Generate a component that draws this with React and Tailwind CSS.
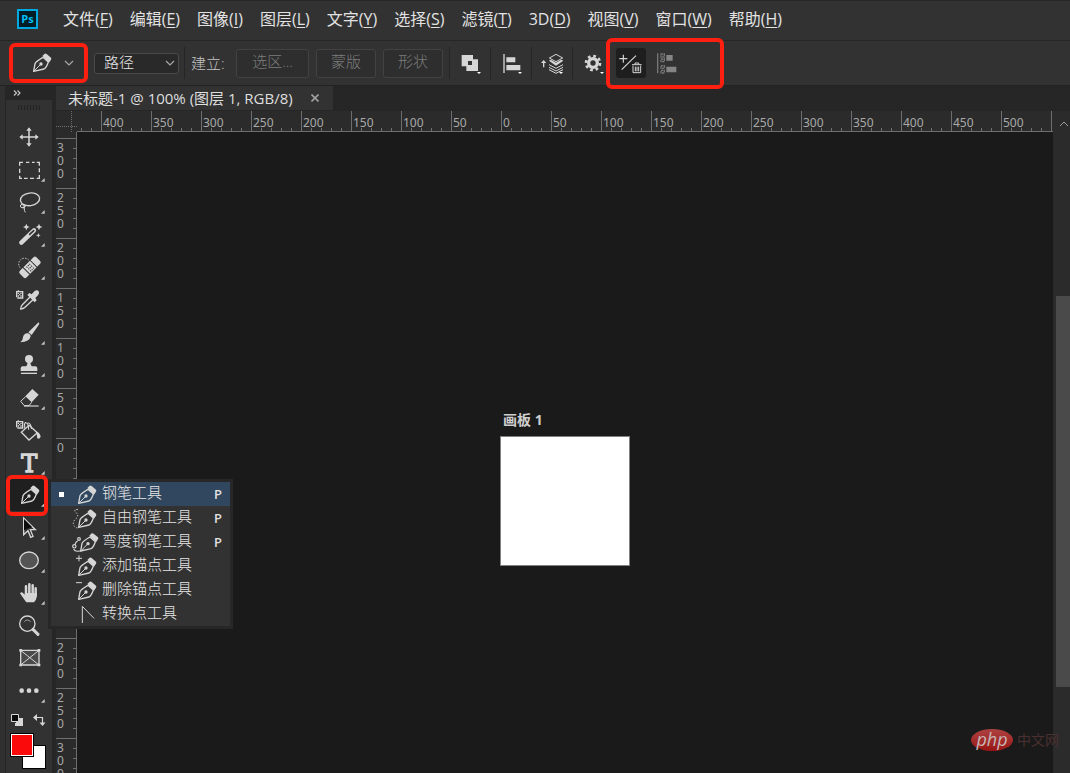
import React from "react";

const INK = "#d6d6d6";

function Glyph({ children, className = "size-[30px]" }) {
  return (
    <svg viewBox="0 0 90 90" className={`${className} shrink-0 overflow-visible`} fill="none" stroke={INK} strokeWidth="4" aria-hidden="true">
      {children}
    </svg>
  );
}

function Nib() {
  return (
    <g>
      <path d="M5 56 L9 33 Q12 26 33 14 L49 28 Q43 46 36 49 Z" strokeWidth="4" strokeLinejoin="round" />
      <path d="M6 55 L25 36" strokeWidth="3" />
      <circle cx="27" cy="34" r="5" fill={INK} stroke="none" />
      <path d="M31 10 L38 3 Q41 2 44 4 L57 15 Q59 18 57 21 L51 30 Z" fill={INK} stroke="none" />
    </g>
  );
}

function PatternChip() {
  return (
    <g stroke="none" fill={INK}>
      <path d="M6 18 h5 v-2 h4 v2 h13 v23 h-18 v-4 h-4 z M10 22 v15 h14 v-15 z" fillRule="evenodd" />
      <path d="M11 23h4v4h-4zM19 23h4v4h-4zM15 27h4v4h-4zM11 31h4v4h-4zM19 31h4v4h-4z" />
    </g>
  );
}

function Chevron() {
  return (
    <svg viewBox="0 0 10 6" className="h-[6px] w-[10px] shrink-0" fill="none" stroke="#a8a8a8" strokeWidth="1.2" aria-hidden="true">
      <path d="M1 1 L5 5 L9 1" />
    </svg>
  );
}

const tools = [
  { name: "移动工具", icon: (
    <g>
      <path d="M45 22 V70 M22 45 H70" strokeWidth="4.5" />
      <path d="M45 16 l8 10 h-16z M45 74 l8 -10 h-16z M16 45 l10 -8 v16z M74 45 l-10 -8 v16z" fill={INK} stroke="none" />
    </g>
  ) },
  { name: "矩形选框工具", more: true, icon: (
    <path d="M17 32 V22 H27 M36 22 H46 M54 22 H62 M68 22 H76 V32 M76 40 V52 M76 60 V70 H68 M60 70 H48 M41 70 H30 M24 70 H17 V62 M17 54 V41" />
  ) },
  { name: "套索工具", more: true, icon: (
    <g>
      <ellipse cx="48" cy="37" rx="29" ry="19" transform="rotate(-8 48 37)" />
      <ellipse cx="26" cy="57" rx="7" ry="5" strokeWidth="3" />
      <path d="M22 50 Q34 58 31 66 Q30 70 34 76 M24 62 Q30 66 36 55" strokeWidth="3" />
    </g>
  ) },
  { name: "魔棒工具", more: true, icon: (
    <g>
      <path d="M22 68 L60 31" strokeWidth="13" strokeLinecap="round" />
      <path d="M47 43 L59 32" stroke="#323232" strokeWidth="5" strokeLinecap="round" />
      <path d="M37 11 l3 7 7 3 -7 3 -3 7 -3 -7 -7 -3 7 -3z M75 11 l3 7 7 3 -7 3 -3 7 -3 -7 -7 -3 7 -3z M73 39 l2 5 5 2 -5 2 -2 5 -2 -5 -5 -2 5 -2z" fill={INK} stroke="none" />
    </g>
  ) },
  { name: "污点修复画笔工具", more: true, icon: (
    <g>
      <g transform="rotate(-45 48 43)">
        <rect x="13" y="29" width="70" height="28" rx="6" fill={INK} stroke="none" />
        <path d="M33 28 V58 M63 28 V58" stroke="#323232" strokeWidth="3" />
        <path d="M42 34 V55 M48 34 V55 M54 34 V55" stroke="#323232" strokeWidth="3" strokeDasharray="4 4" />
      </g>
      <path d="M18 44 A16 16 0 1 1 45 22" strokeWidth="3" strokeDasharray="4 4" />
    </g>
  ) },
  { name: "吸管工具", icon: (
    <g>
      <PatternChip />
      <path d="M48 36 L25 59 Q20 64 20 72 Q28 72 33 67 L57 44" strokeWidth="4" />
      <path d="M40 30 L46 24 L53 28 L61 19 Q68 13 74 18 Q78 24 72 31 L64 39 L68 46 L62 52 Z" fill={INK} stroke="none" />
    </g>
  ) },
  { name: "画笔工具", more: true, icon: (
    <g fill={INK} stroke="none">
      <path d="M75 14 Q77 16 74 21 L53 51 L43 43 L69 17 Q73 13 75 14z" />
      <path d="M40 46 Q49 47 50 55 Q47 72 19 73 Q27 67 27 58 Q29 47 40 46z" />
    </g>
  ) },
  { name: "仿制图章工具", more: true, icon: (
    <g fill={INK} stroke="none">
      <circle cx="45" cy="27" r="12" />
      <path d="M40 34 h10 q-2 10 3 15 h12 q5 1 5 6 v8 h-50 v-8 q0 -5 5 -6 h12 q5 -5 3 -15z" />
      <path d="M21 68 h48 v4 h-48z" />
    </g>
  ) },
  { name: "橡皮擦工具", more: true, icon: (
    <g>
      <path d="M34 40 L55 18 L74 35 L53 58 Z" fill={INK} stroke="none" />
      <path d="M35 41 L20 55 L31 68 H45 L53 58" strokeWidth="3" />
      <path d="M30 69 H74" strokeWidth="3.5" />
    </g>
  ) },
  { name: "油漆桶工具", icon: (
    <g>
      <PatternChip />
      <path d="M45 31 L70 53 L45 75 L22 52 Z" strokeWidth="4" />
      <path d="M33 42 Q29 22 36 23 Q43 23 44 44 M42 24 Q50 23 53 42" strokeWidth="3.5" />
      <path d="M65 50 Q77 50 80 64 Q79 71 74 71 Q68 71 69 62z" fill={INK} stroke="none" />
    </g>
  ) },
  { name: "文字工具", more: true, icon: (
    <text x="46" y="71" textAnchor="middle" fontSize="72" fontFamily="DejaVu Serif, serif" fill={INK}>T</text>
  ) },
  { name: "钢笔工具", more: true, active: true, icon: <g transform="translate(18 14)"><Nib /></g> },
  { name: "路径选择工具", more: true, icon: (
    <g>
      <path d="M29 15 V65 L42 53 L50 73 L57 70 L49 50 H64 Z" fill="#323232" strokeWidth="4" />
      <path d="M30 18 V52 L42 46 L54 42 Z" fill="#0c0c0c" stroke="none" />
    </g>
  ) },
  { name: "椭圆工具", more: true, icon: <ellipse cx="45" cy="43" rx="28" ry="25" fill="#545454" /> },
  { name: "抓手工具", more: true, icon: (
    <g>
      <path d="M36 25 V50 M46 19 V48 M56 22 V48 M65 31 V50" strokeWidth="7.5" strokeLinecap="round" />
      <path d="M32 45 H69 V54 Q67 66 60 73 H37 Q30 64 18 46 Q22 40 27 45 L33 51z" fill={INK} stroke="none" />
    </g>
  ) },
  { name: "缩放工具", icon: (
    <g>
      <circle cx="40" cy="38" r="23" />
      <path d="M31 32 Q39 22 50 32" stroke="#a0a0a0" strokeWidth="3" />
      <path d="M57 55 L72 70" strokeWidth="9" strokeLinecap="round" />
    </g>
  ) },
  { name: "画框工具", icon: (
    <g>
      <path d="M20 22 H75 V66 H20 Z" fill="#4a4a4a" />
      <path d="M20 22 L75 66 M75 22 L20 66" strokeWidth="3" />
      <path d="M16 18h8v8h-8zM71 18h8v8h-8zM16 62h8v8h-8zM71 62h8v8h-8z" fill={INK} stroke="none" />
    </g>
  ) },
  { name: "编辑工具栏", more: true, icon: (
    <g fill={INK} stroke="none">
      <circle cx="23" cy="44" r="7" />
      <circle cx="45" cy="44" r="7" />
      <circle cx="67" cy="44" r="7" />
    </g>
  ) },
];

const menus = [
  ["文件", "F"], ["编辑", "E"], ["图像", "I"], ["图层", "L"], ["文字", "Y"], ["选择", "S"],
  ["滤镜", "T"], ["3D", "D"], ["视图", "V"], ["窗口", "W"], ["帮助", "H"],
];

const penTools = [
  { name: "钢笔工具", shortcut: "P", selected: true },
  { name: "自由钢笔工具", shortcut: "P", extra: <path d="M21 20 Q10 17 12 26 Q23 33 19 44 Q7 52 7 62 Q9 73 20 75" strokeWidth="3" strokeDasharray="4 5" /> },
  { name: "弯度钢笔工具", shortcut: "P", wide: true, extra: (
    <g strokeWidth="3.5">
      <path d="M38 69 Q12 78 8 66 M12 52 Q14 45 20 41" />
      <circle cx="24" cy="36" r="4" />
      <circle cx="10" cy="58" r="5" />
    </g>
  ) },
  { name: "添加锚点工具", extra: <path d="M15 22 H33 M24 13 V31" strokeWidth="3" /> },
  { name: "删除锚点工具", extra: <path d="M15 23 H33" strokeWidth="3" /> },
  { name: "转换点工具", plain: <path d="M34 72 V22 L69 58" strokeWidth="3" /> },
];

const hMarks = [400, 350, 300, 250, 200, 150, 100, 50, 0, 50, 100, 150, 200, 250, 300, 350, 400, 450, 500, ""];
const vMarks = [300, 250, 200, 150, 100, 50, 0, 50, 100, 150, 200, 250, 300];
const fifths = [0, 1, 2, 3, 4];

function Marker({ className }) {
  return <span className={`pointer-events-none absolute z-30 rounded-md border-4 border-[#fd2010] ${className}`} />;
}

function Divider() {
  return <span className="h-8 w-px shrink-0 bg-[#252525]" />;
}

function IconButton({ label, children }) {
  return (
    <button type="button" aria-label={label} className="flex h-8 w-10 shrink-0 items-center justify-center">
      <Glyph>
        {children}
        <path d="M66 72 h12 l-6 6z" fill="#fff" stroke="none" />
      </Glyph>
    </button>
  );
}

function MenuBar() {
  return (
    <header className="flex h-10 shrink-0 items-center border-t border-[#262626] bg-[#323232] pb-1 pl-[17px]">
      <span className="mr-[25px] flex h-5 w-[21px] items-center justify-center border-2 border-[#00a9e2] bg-[#001c27] font-['Open_Sans'] text-[11px] leading-none font-bold text-[#00bff5]">Ps</span>
      <nav className="flex gap-[17px] text-[16px] leading-5 whitespace-nowrap text-[#e2e2e2]">
        {menus.map(([label, key]) => (
          <button type="button" key={label}>{label}(<u className="underline-offset-2">{key}</u>)</button>
        ))}
      </nav>
    </header>
  );
}

function OptionsBar() {
  const action = "h-[29px] rounded-[3px] border border-[#424242] bg-[#2e2e2e] pb-1 text-[15px] leading-5 font-light text-[#7d7d7d]";
  return (
    <section className="flex h-[46px] shrink-0 items-center border-y border-t-[#262626] border-b-[#222] bg-[#323232] pl-[9px]">
      <div className="relative flex h-10 w-[79px] shrink-0 items-center">
        <button type="button" aria-label="钢笔工具预设" className="flex h-8 w-full items-center justify-end gap-2 pr-[14px]">
          <Glyph>
            <g transform="translate(18 14)"><Nib /></g>
          </Glyph>
          <Chevron />
        </button>
        <Marker className="inset-0" />
      </div>
      <label className="relative ml-[6px] flex items-center">
        <span className="sr-only">工具模式</span>
        <select className="h-[21px] w-[85px] appearance-none rounded-[3px] border border-[#4a4a4a] bg-[#292929] pb-1 pl-[9px] text-[15px] leading-4 font-light text-[#e8e8e8]">
          <option>路径</option>
          <option>形状</option>
          <option>像素</option>
        </select>
        <span className="pointer-events-none absolute right-1"><Chevron /></span>
      </label>
      <span className="ml-[5px]" />
      <Divider />
      <span className="ml-[6px] w-[45px] text-[15px] leading-5 font-light whitespace-nowrap text-[#c4c4c4]">建立:</span>
      <div className="flex shrink-0 gap-[7px] pr-[6px]">
        <button type="button" className={`${action} w-[73px]`}>选区...</button>
        <button type="button" className={`${action} w-[60px]`}>蒙版</button>
        <button type="button" className={`${action} w-[60px]`}>形状</button>
      </div>
      <Divider />
      <IconButton label="路径操作">
        <path d="M20 21 H54 V34 H69 V69 H34 V55 H20 Z M39 39 V51 H51 V39 Z" fill={INK} fillRule="evenodd" stroke="none" />
      </IconButton>
      <Divider />
      <IconButton label="路径对齐方式">
        <path d="M24 18 V75" />
        <path d="M31 28 h27 v15 h-27z M31 51 h42 v16 h-42z" fill={INK} stroke="none" />
      </IconButton>
      <Divider />
      <IconButton label="路径排列方式">
        <path d="M20 58 V42" />
        <path d="M20 36 l8 9 h-16z" fill={INK} stroke="none" />
        <path d="M57 19 L77 30 L57 41 L37 30 Z" strokeWidth="3" />
        <path d="M36 38 L41 35 L57 44 L73 35 L79 38 L57 53 Z" fill={INK} stroke="none" />
        <path d="M36 50 L57 61 L78 50 M36 58 L57 69 L78 58 M36 65 L57 76 L78 65" strokeWidth="3" />
      </IconButton>
      <Divider />
      <IconButton label="设置">
        <circle cx="45" cy="45" r="13" strokeWidth="10" />
        <circle cx="45" cy="45" r="21" strokeWidth="8" strokeDasharray="8.25 8.25" />
      </IconButton>
      <div className="relative ml-[3px] flex shrink-0 items-center gap-[6px]">
        <button type="button" aria-label="自动添加/删除" className="rounded-[3px] bg-[#1e1e1e]">
          <Glyph>
            <path d="M22 20 V44 M10 32 H34 M17 65 L60 23" strokeWidth="3.5" />
            <path d="M48 50 H77 M57 49 V45 H68 V49 M51 53 V74 H74 V53 M58 56 V70 M63 56 V70 M68 56 V70" strokeWidth="3" />
          </Glyph>
        </button>
        <button type="button" aria-label="对齐边缘">
          <Glyph>
            <g stroke="#777" strokeWidth="3">
              <path d="M17 16 V76" strokeWidth="4" />
              <path d="M27 18 h10 v9 h-10z M27 33 h10 v8 h-10z M27 53 h10 v8 h-10z M27 67 h10 v8 h-10z" strokeWidth="4" strokeDasharray="7 2" />
              <path d="M43 21 h19 v17 h-19z M43 56 h30 v17 h-30z" fill="#858585" stroke="none" />
            </g>
          </Glyph>
        </button>
        <Marker className="-top-[10px] -left-[10px] h-[51px] w-[118px]" />
      </div>
    </section>
  );
}

function PenFlyout() {
  return (
    <ul role="menu" className="absolute top-0 left-[42px] z-20 w-[185px] border-[3px] border-[#272727] bg-[#323232] text-[15px] leading-6 text-[#e6e6e6]">
      {penTools.map((tool) => (
        <li key={tool.name} role="none">
          <button type="button" role="menuitem" className={`flex h-6 w-full items-center pr-2 pl-2 whitespace-nowrap ${tool.selected ? "bg-[#30475f]" : ""}`}>
            <span className={`size-[5px] shrink-0 ${tool.selected ? "bg-white" : ""}`} />
            <span className="ml-[7px] flex w-[31px] shrink-0">
              <Glyph>
                {tool.extra}
                {tool.plain || <g transform={tool.wide ? "translate(24 16)" : "translate(18 17)"}><Nib /></g>}
              </Glyph>
            </span>
            <span className="flex-1 pb-1 text-left font-light">{tool.name}</span>
            <span className="font-['Noto_Sans'] text-[13px] font-medium">{tool.shortcut}</span>
          </button>
        </li>
      ))}
    </ul>
  );
}

function Toolbar() {
  return (
    <aside className="relative z-10 flex w-[46px] shrink-0 flex-col bg-[#323232]">
      <div className="flex h-[14px] shrink-0 items-center bg-[#262626] pl-[7px]">
        <svg viewBox="0 0 8 6" className="h-[6px] w-2" fill="none" stroke="#c4c4c4" strokeWidth="1.2" aria-hidden="true">
          <path d="M1 0.5 L3.5 3 L1 5.5 M4.5 0.5 L7 3 L4.5 5.5" />
        </svg>
      </div>
      <div className="flex h-[21px] shrink-0 justify-center gap-[2px] pt-[5px]">
        {[0, 1, 2, 3, 4, 5, 6, 7].map((n) => <span key={n} className="h-[5px] w-px bg-[#222]" />)}
      </div>
      <div className="flex h-[586px] shrink-0 flex-col">
        {tools.map((tool) => (
          <div key={tool.name} className="relative flex flex-1 items-center justify-center">
            <button type="button" aria-label={tool.name} className={`flex h-8 items-center justify-center ${tool.active ? "w-[38px] bg-[#1f1f1f]" : "w-10"}`}>
              <Glyph>
                {tool.icon}
                {tool.more && <path d="M92 69 V80 H81 Z" fill="#c4c4c4" stroke="none" />}
              </Glyph>
            </button>
            {tool.active && <Marker className="-top-1 left-0 h-[41px] w-[42px]" />}
            {tool.active && <PenFlyout />}
          </div>
        ))}
      </div>
      <div className="flex h-[26px] shrink-0 items-center gap-2 pl-1">
        <button type="button" aria-label="默认前景色和背景色">
          <svg viewBox="0 0 14 14" className="size-[14px]" aria-hidden="true">
            <path d="M6 5h7v8h-8v-3h1z" fill="#d6d6d6" />
            <path d="M1.5 1.5h7v7h-7z" fill="#0a0a0a" stroke="#d6d6d6" />
          </svg>
        </button>
        <button type="button" aria-label="切换前景色和背景色">
          <svg viewBox="0 0 14 14" className="size-[14px]" fill="none" stroke="#d6d6d6" strokeWidth="1.2" aria-hidden="true">
            <path d="M4 4.5H10.5V10" />
            <path d="M1 4.5L5 1V8zM10.5 13L7.5 9.5H13.5z" fill="#d6d6d6" stroke="none" />
          </svg>
        </button>
      </div>
      <div className="relative ml-1 h-9 w-9 shrink-0">
        <button type="button" aria-label="背景色" className="absolute right-0 bottom-0 size-6 border border-black bg-white" />
        <button type="button" aria-label="前景色" className="absolute top-0 left-0 size-6 border border-black bg-[#fa0a0a] ring-1 ring-white ring-inset" />
      </div>
    </aside>
  );
}

function HorizontalRuler() {
  return (
    <div className="flex h-[21px] min-w-0 flex-1 overflow-hidden border-b border-[#6e6e6e] bg-[#2b2b2b] font-['Noto_Sans'] text-[12px] text-[#a8a8a8]">
      <div className="flex w-6 shrink-0 items-end pl-1">
        <span className="h-[3px] w-[10px] border-l border-[#6e6e6e]" />
        <span className="h-[3px] w-[10px] border-l border-[#6e6e6e]" />
      </div>
      {hMarks.map((mark, i) => (
        <div key={i} className="flex w-[50px] shrink-0 flex-col justify-between bg-[linear-gradient(#6e6e6e,#6e6e6e)] bg-[length:1px_100%] bg-no-repeat">
          <span className="h-4 pt-1 pl-[2px] leading-4">{mark}</span>
          <span className="flex">
            {fifths.map((n) => <span key={n} className="h-[3px] w-[10px] border-l border-[#6e6e6e]" />)}
          </span>
        </div>
      ))}
    </div>
  );
}

function VerticalRuler() {
  return (
    <div className="w-[21px] shrink-0 overflow-hidden border-r border-[#6e6e6e] bg-[#2b2b2b] pt-[6px] font-['Noto_Sans'] text-[12px] text-[#a8a8a8]">
      {vMarks.map((mark, i) => (
        <div key={i} className="flex h-[50px] justify-between bg-[linear-gradient(#6e6e6e,#6e6e6e)] bg-[length:100%_1px] bg-no-repeat">
          <span className="ml-[1px] w-2 pt-[3px] leading-[13px] break-all">{mark}</span>
          <span>
            {fifths.map((n) => <span key={n} className="block h-[10px] w-[3px] border-t border-[#6e6e6e]" />)}
          </span>
        </div>
      ))}
    </div>
  );
}

function Watermark() {
  return (
    <div className="pointer-events-none absolute right-[11px] bottom-[22px] flex items-center gap-1">
      <span className="flex h-[22px] w-[42px] items-center justify-center rounded-[50%] bg-linear-to-b from-[#ad4040] to-[#971313] pb-[2px] font-['Open_Sans'] text-[18px] leading-none font-medium text-[#c9b5b5] italic">php</span>
      <span className="text-[14px] leading-5 text-[#4a3030]">中文网</span>
    </div>
  );
}

export default function App() {
  return (
    <div className="flex h-screen flex-col overflow-hidden bg-[#262626] font-['Open_Sans','Noto_Sans_CJK_SC',sans-serif]">
      <MenuBar />
      <OptionsBar />
      <div className="flex min-h-0 flex-1">
        <span className="w-[6px] shrink-0 border-r border-[#262626] bg-[#303030]" />
        <Toolbar />
        <main className="relative ml-1 flex min-w-0 flex-1 flex-col">
          <div className="flex h-[25px] shrink-0">
            <div className="flex h-6 items-center gap-[18px] bg-[#323232] pr-[14px] pl-3 whitespace-nowrap text-[#dedede]">
              <span className="text-[15px] leading-5">未标题-1 @ 100% (图层 1, RGB/8)</span>
              <button type="button" aria-label="关闭">
                <svg viewBox="0 0 8 8" className="size-2" stroke="#a0a0a0" strokeWidth="1.6" aria-hidden="true"><path d="M0.5 0.5L7.5 7.5M7.5 0.5L0.5 7.5" /></svg>
              </button>
            </div>
          </div>
          <div className="flex min-h-0 flex-1">
            <div className="flex min-w-0 flex-1 flex-col">
              <div className="flex shrink-0">
                <div className="flex h-[21px] w-[21px] shrink-0 bg-[#2b2b2b]">
                  <svg viewBox="0 0 21 21" className="size-[21px]" stroke="#6e6e6e" strokeDasharray="1 1" aria-hidden="true"><path d="M15.5 0V21M0 15.5H21" /></svg>
                </div>
                <HorizontalRuler />
              </div>
              <div className="flex min-h-0 flex-1">
                <VerticalRuler />
                <div className="flex flex-1 justify-center bg-[#1a1a1a] pt-[278px]">
                  <div>
                    <p className="pb-[6px] pl-[3px] text-[14px] leading-5 font-bold text-[#cfcfcf]">画板 1</p>
                    <div className="size-[130px] border border-[#808080] bg-white" />
                  </div>
                </div>
              </div>
            </div>
            <div className="flex w-[17px] shrink-0 flex-col items-end bg-[#2b2b2b]">
              <div className="flex h-[185px] w-full shrink-0 justify-end pt-[10px] pr-[1px]">
                <svg viewBox="0 0 10 6" className="h-[6px] w-[10px]" fill="none" stroke="#9a9a9a" aria-hidden="true"><path d="M1 5L5 1L9 5" /></svg>
              </div>
              <div className="h-[59%] w-[14px] bg-[#4a4a4a]" />
            </div>
          </div>
          <Watermark />
        </main>
      </div>
    </div>
  );
}
